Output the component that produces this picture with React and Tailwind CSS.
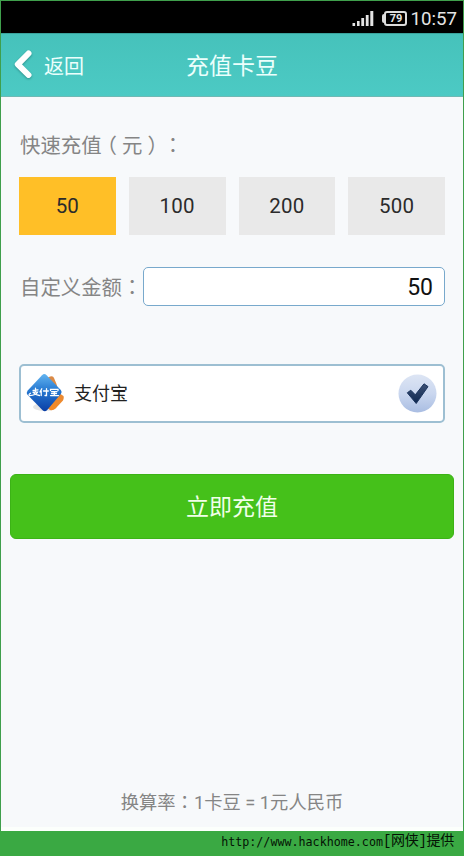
import React, { useState } from 'react';

const amounts = ['50', '100', '200', '500'];

// full-width punctuation, centred in its cell
const P = ({ children }) => (
  <span className="inline-block w-[1em] text-center font-['Noto_Sans_CJK_TC',sans-serif] [font-feature-settings:'halt']">
    {children}
  </span>
);

const StatusBar = () => (
  <div className="h-8 bg-black flex items-center justify-end pr-[6px] pt-[3px]">
    <svg width="23" height="17" viewBox="0 0 23 17" fill="#e4e4e4" className="mr-[7px]">
      <rect x="0.5" y="13" width="2.6" height="3" />
      <rect x="5" y="11" width="2.6" height="5" />
      <rect x="9.3" y="8" width="2.8" height="8" />
      <rect x="13.8" y="5" width="2.8" height="11" />
      <rect x="18.3" y="1" width="3" height="15" />
    </svg>
    <div className="w-[2px] h-[9px] bg-[#dcdcdc] rounded-l-sm" />
    <div className="w-[23px] h-[15px] border-2 border-[#dcdcdc] rounded-[3px] mr-[3px] flex items-center justify-center font-bold text-[11px] leading-none text-[#e4e4e4]">
      79
    </div>
    <span className="text-[18.7px] leading-none text-[#e4e4e4] pt-[2px]">10:57</span>
  </div>
);

const Header = () => (
  <div className="h-16 grid grid-cols-[1fr_auto_1fr] items-center border-t border-b border-t-[#3aa39c] border-b-[#6fb9b4] bg-linear-to-b from-[#46c2bb] to-[#4ccac4] text-[#ecfffc]">
    <button className="flex items-center pl-[11px] text-left">
      <svg width="20" height="30" viewBox="0 0 20 30" className="mr-[12px] drop-shadow-[0_1px_1px_rgba(0,60,60,0.4)]">
        <path d="M16.500 3.500 5.800 14.300 16.500 25" fill="none" stroke="#fff" strokeWidth="6" strokeLinecap="round" strokeLinejoin="round" />
      </svg>
      <span className="text-[20px] leading-none pt-[3px]">返回</span>
    </button>
    <h1 className="text-[23px] leading-none pt-[3px]">充值卡豆</h1>
    <span />
  </div>
);

const AlipayLogo = () => (
  <svg width="38" height="40" viewBox="0 0 38 40" className="-mt-px">
    <defs>
      <linearGradient id="blue" x1="0" y1="0" x2="0" y2="1">
        <stop offset="0" stopColor="#62b4f0" />
        <stop offset="0.45" stopColor="#2577d0" />
        <stop offset="1" stopColor="#0b3fa6" />
      </linearGradient>
      <linearGradient id="orange" x1="0" y1="0" x2="0" y2="1">
        <stop offset="0" stopColor="#d98a48" />
        <stop offset="1" stopColor="#f58a24" />
      </linearGradient>
    </defs>
    <ellipse cx="19" cy="34" rx="12" ry="4" fill="#000" opacity="0.1" />
    <path d="M22 4.500 Q27 2 28 5 L30.500 11 33 20 37.500 23 Q38.200 25 37 27.500 L29.500 35.500 Q27 38 24 37 L19 33Z" fill="url(#orange)" />
    <path d="M16 2.200 Q18.300 0 20.600 2.200 L34.800 17 Q36.500 19 34.800 21 L21 37.200 Q18.800 39.200 16.600 37.200 L1.500 21.700 Q0 19.700 1.500 17.700Z" fill="url(#blue)" />
    <g fill="none" stroke="#fff" strokeWidth="1.3" strokeLinecap="round">
      <path d="M7 17.300 12 16.800M9.500 15.200v3.800M7 19.200h4.500Q10 22 3.500 22.700Q2.200 21.500 4.500 20.200M7.500 19.700Q9.500 22.300 13.500 22.500" />
      <path d="M15.800 15.700 14 19M15.200 18v4.500M17.500 18h4.800M20.500 15.700v6.800h-1.500" />
      <path d="M24.500 17.500v-1.200h7.500v1.200M25.500 18.600h5.500M25.500 20.500h5M24.500 22.600h8M28.300 18.600v4" />
    </g>
  </svg>
);

const CheckBadge = () => (
  <svg width="39" height="39" viewBox="0 0 39 39" className="-mt-px">
    <defs>
      <linearGradient id="badge" x1="0" y1="0" x2="0" y2="1">
        <stop offset="0" stopColor="#dde5f4" />
        <stop offset="0.5" stopColor="#cad7ef" />
        <stop offset="1" stopColor="#a9bde2" />
      </linearGradient>
      <linearGradient id="tick" x1="0" y1="0" x2="0" y2="1">
        <stop offset="0" stopColor="#3d5175" />
        <stop offset="1" stopColor="#0d2750" />
      </linearGradient>
    </defs>
    <circle cx="19.500" cy="19.500" r="19" fill="url(#badge)" />
    <path
      d="M9.300 18.800 12.800 16.200 17.300 20.800 26 9.800 30 12.600 18.200 29.500Z"
      fill="url(#tick)"
      stroke="#1c355e"
      strokeWidth="1"
      strokeLinejoin="round"
    />
  </svg>
);

export default function App() {
  const [amount, setAmount] = useState('50');

  return (
    <div className="w-[464px] h-[856px] flex flex-col bg-[#3aa943] font-[Roboto,'Noto_Sans_CJK_SC',sans-serif]">
      <div className="h-[831px] border-x border-t border-[#3f9f4c] bg-[#f7f9fb] flex flex-col">
        <StatusBar />
        <Header />

        <main className="flex-1 flex flex-col">
          <div className="px-[18px] pt-[33px]">
            <p className="h-[28px] pl-px text-[20.4px] leading-[28px] text-[#858585]">
              快速充值<P>（</P>元<P>）</P><P>：</P>
            </p>
            <div className="grid grid-cols-4 gap-[13px] mt-[19px]">
              {amounts.map(value => (
                <button
                  key={value}
                  onClick={() => setAmount(value)}
                  className={`h-[58px] pt-px text-[20.5px] tracking-[0.2px] text-[#2b2b2b] ${amount === value ? 'bg-[#ffbf27]' : 'bg-[#e9e9e9]'}`}
                >
                  {value}
                </button>
              ))}
            </div>

            <label className="flex items-center mt-8">
              <span className="w-[124px] h-[30px] pl-px shrink-0 whitespace-nowrap text-[20.4px] leading-[28px] text-[#858585]">
                自定义金额<P>：</P>
              </span>
              <input
                value={amount}
                onChange={(e) => setAmount(e.target.value)}
                className="flex-1 min-w-0 h-[39px] bg-white border-[1.5px] border-[#78a9cc] rounded-[5px] pr-[11px] pt-[2px] text-right text-[23px] text-[#111] outline-none"
              />
            </label>

            <div className="mt-[58px] h-[59px] flex items-center bg-white border-2 border-[#9dbfd2] rounded-[5px] pl-[5px] pr-[6px]">
              <AlipayLogo />
              <span className="ml-[10px] flex-1 text-[18px] leading-none text-[#222]">支付宝</span>
              <CheckBadge />
            </div>
          </div>

          <button className="mx-[9px] mt-[51px] h-[65px] pt-[4px] rounded-md border border-[#3cb316] bg-[#45c11a] text-[23px] text-[#f0ffe9]">
            立即充值
          </button>

          <p className="mt-auto mb-[13px] h-[26px] text-center text-[18.3px] leading-[26px] text-[#858585]">
            换算率<P>：</P>1卡豆 = 1元人民币
          </p>
        </main>
        <div className="h-[4px] bg-[#fcfffc]" />
      </div>

      <footer className="h-[25px] flex justify-end pr-[10px] text-[#041204] whitespace-pre">
        <span className="font-['DejaVu_Sans_Mono',monospace] text-[11.7px] leading-[22px]">http://www.hackhome.com</span>
        <span className="font-['Liberation_Mono','Noto_Sans_CJK_SC',monospace] text-[14px] leading-[21px] tracking-[-0.3px]">[网侠]提供</span>
      </footer>
    </div>
  );
}
